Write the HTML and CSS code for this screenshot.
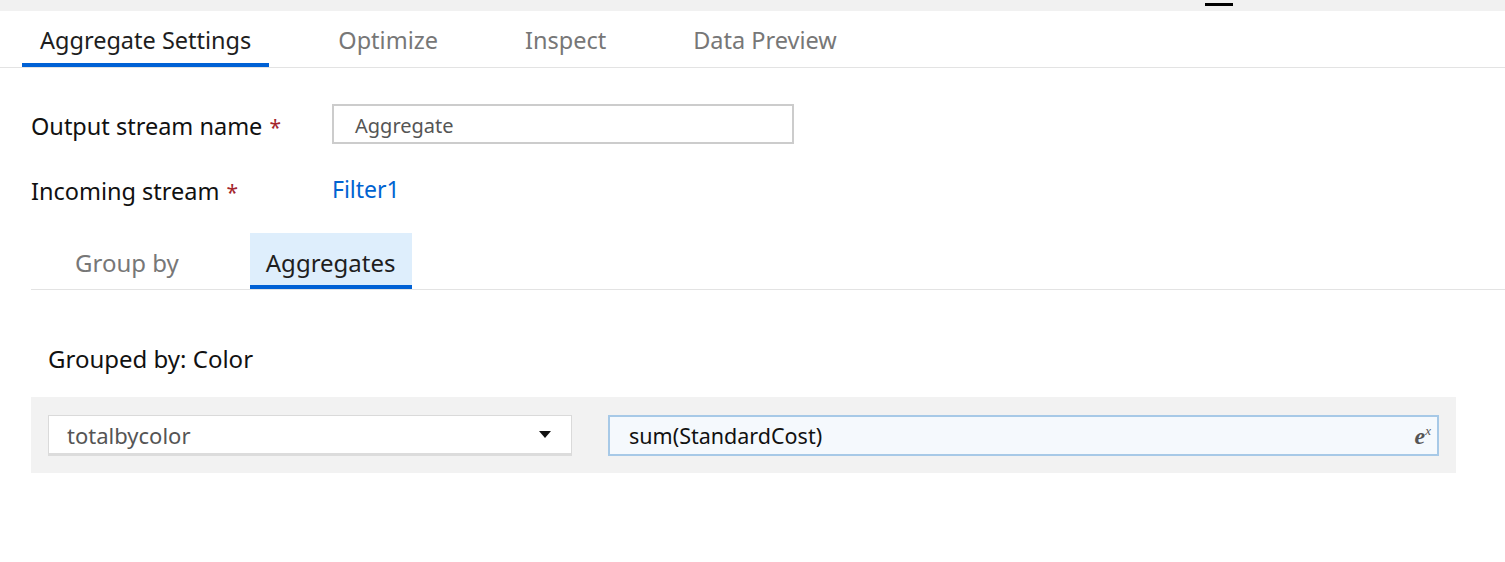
FILE: index.html
```html
<!DOCTYPE html>
<html>
<head>
<meta charset="utf-8">
<link rel="stylesheet" href="styles.css">
</head>
<body>
<div class="topbar"><span class="topbar-mark"></span></div>
<nav class="tabs">
  <div class="tab active">Aggregate Settings</div>
  <div class="tab">Optimize</div>
  <div class="tab">Inspect</div>
  <div class="tab">Data Preview</div>
</nav>
<main class="content">
  <div class="row row-first">
    <div class="label">Output stream name <span class="req">*</span></div>
    <div class="textbox">Aggregate</div>
  </div>
  <div class="row row-second">
    <div class="label">Incoming stream <span class="req">*</span></div>
    <a class="link">Filter1</a>
  </div>
  <div class="subtabs">
    <div class="subtab">Group by</div>
    <div class="subtab active">Aggregates</div>
  </div>
  <div class="grouped">Grouped by: Color</div>
  <div class="panel">
    <div class="dropdown">
      <span class="dd-text">totalbycolor</span>
      <svg class="dd-arrow" width="12" height="7" viewBox="0 0 12 7"><path d="M0 0 H12 L6 7 Z" fill="#111"/></svg>
    </div>
    <div class="expr">
      <span class="expr-text">sum(StandardCost)</span>
      <span class="expr-icon">e<sup>x</sup></span>
    </div>
  </div>
</main>
</body>
</html>
```

FILE: styles.css
```css
* { box-sizing: border-box; }
html, body { margin: 0; padding: 0; background: #fff; }
body {
  font-family: "Noto Sans", "Open Sans", Arial, sans-serif;
  color: #1b1b1b;
  width: 1505px;
  height: 562px;
  overflow: hidden;
}
.topbar {
  height: 11px;
  background: #f1f1f1;
  display: flex;
  justify-content: flex-end;
  padding-right: 272px;
}
.topbar-mark {
  display: block;
  width: 28px;
  height: 3px;
  margin-top: 3px;
  background: #000;
}
.tabs {
  display: flex;
  gap: 51px;
  padding-left: 22px;
  border-bottom: 1px solid #e3e3e3;
}
.tab {
  padding: 14px 18px 8px;
  line-height: 30px;
  font-size: 23.5px;
  color: #777;
  border-bottom: 4px solid transparent;
}
.tab.active {
  color: #1e1e1e;
  border-bottom-color: #0061d5;
}
.content {
  padding-left: 31px;
}
.row {
  display: flex;
  align-items: center;
  height: 40px;
}
.row-first { margin-top: 36px; }
.row-second { margin-top: 25px; }
.label {
  width: 301px;
  font-size: 23.5px;
  line-height: 30px;
  padding-top: 4px;
  color: #111;
}
.req {
  color: #a4262c;
  margin-left: 1px;
  font-size: 21px;
}
.textbox {
  width: 462px;
  height: 40px;
  border: 2px solid #cccccc;
  padding-left: 21px;
  padding-top: 2px;
  font-size: 20px;
  line-height: 36px;
  color: #555;
}
.link {
  font-size: 23px;
  color: #0063d1;
}
.subtabs {
  margin-top: 24px;
  display: flex;
  gap: 55px;
  padding-left: 28px;
  border-bottom: 1px solid #e3e3e3;
}
.subtab {
  padding: 15px 16px 7px;
  line-height: 30px;
  font-size: 24px;
  color: #777;
  border-bottom: 4px solid transparent;
}
.subtab.active {
  background: #deeefc;
  color: #1e1e1e;
  border-bottom-color: #0061d5;
}
.grouped {
  margin-top: 54px;
  padding-left: 17px;
  line-height: 30px;
  font-size: 24px;
  color: #111;
}
.panel {
  margin-top: 23px;
  width: 1425px;
  background: #f2f2f2;
  padding: 18px 17px 17px;
  display: flex;
  gap: 36px;
}
.dropdown {
  flex: 0 0 524px;
  height: 41px;
  background: #fff;
  border: 1px solid #dadada;
  border-bottom: 3px solid #dcdcdc;
  display: flex;
  align-items: center;
  justify-content: space-between;
  padding: 0 20px 0 18px;
}
.dd-text {
  font-size: 22px;
  color: #555;
}
.dd-arrow { display: block; }
.expr {
  flex: 1;
  height: 41px;
  background: #f5f9fd;
  border: 2px solid #a7c9e7;
  display: flex;
  align-items: center;
  justify-content: space-between;
  padding: 0 6px 0 19px;
}
.expr-text {
  font-size: 21.5px;
  color: #111;
}
.expr-icon {
  font-family: "Liberation Serif", "DejaVu Serif", serif;
  font-style: italic;
  font-weight: bold;
  font-size: 24px;
  color: #555;
  line-height: 1;
}
.expr-icon sup {
  font-size: 13px;
  font-weight: normal;
  vertical-align: 9px;
}
```
